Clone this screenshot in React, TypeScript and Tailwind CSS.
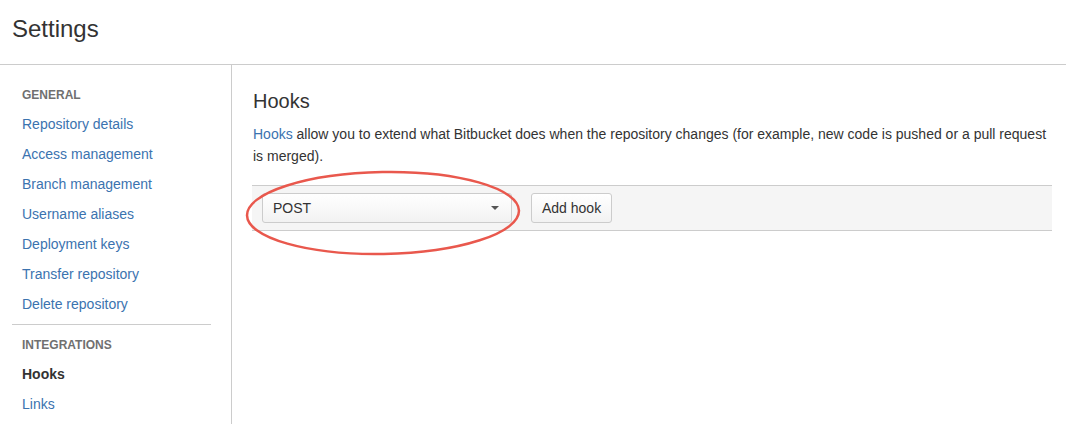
const general = [
  "Repository details",
  "Access management",
  "Branch management",
  "Username aliases",
  "Deployment keys",
  "Transfer repository",
  "Delete repository",
];

export default function App() {
  return (
    <div className="w-[1066px] h-[424px] overflow-hidden bg-white text-[#333] font-['Liberation_Sans',Arial,sans-serif]">
      <div className="h-[65px] border-b border-[#ccc] pl-[12px] pt-[14px]">
        <h1 className="text-[24px] leading-[30px] text-[#333]">Settings</h1>
      </div>
      <div className="flex h-[359px]">
        <div className="w-[232px] shrink-0 border-r border-[#ccc] pt-[20px] pl-[12px] pr-[20px]">
          <div className="pl-[10px] text-[12px] font-bold leading-[20px] text-[#707070]">GENERAL</div>
          <ul className="mt-[9px] flex flex-col gap-[10px] pl-[10px] text-[14px] leading-[20px] text-[#3b73af]">
            {general.map((item) => (
              <li key={item}>{item}</li>
            ))}
          </ul>
          <div className="mt-[10px] h-px bg-[#ccc]" />
          <div className="mt-[10px] pl-[10px] text-[12px] font-bold leading-[20px] text-[#707070]">INTEGRATIONS</div>
          <ul className="mt-[9px] flex flex-col gap-[10px] pl-[10px] text-[14px] leading-[20px]">
            <li className="font-bold text-[#333]">Hooks</li>
            <li className="text-[#3b73af]">Links</li>
          </ul>
        </div>
        <div className="relative flex-1 pl-[21px] pr-[14px] pt-[22px]">
          <h2 className="text-[20px] leading-[28px] text-[#333]">Hooks</h2>
          <p className="mt-[8px] text-[14px] leading-[22px]">
            <span className="text-[#3b73af]">Hooks</span> allow you to extend what Bitbucket does when the repository changes (for example, new code is pushed or a pull request is merged).
          </p>
          <div className="-ml-px mt-[18px] flex h-[46px] items-center gap-[19px] border-y border-[#ccc] bg-[#f5f5f5] pl-[10px]">
            <div className="flex h-[30px] w-[250px] items-center justify-between rounded-[3px] border border-[#ccc] bg-gradient-to-b from-white to-[#f2f2f2] pl-[10px] pr-[12px] text-[14px]">
              <span>POST</span>
              <span className="h-0 w-0 border-x-[4px] border-t-[4px] border-x-transparent border-t-[#555]" />
            </div>
            <button className="h-[30px] rounded-[3px] border border-[#ccc] bg-gradient-to-b from-white to-[#f2f2f2] px-[10px] text-[14px] text-[#333]">
              Add hook
            </button>
          </div>
          <svg
            className="pointer-events-none absolute left-[11px] top-[103px]"
            width="280"
            height="90"
            viewBox="0 0 280 90"
          >
            <ellipse
              cx="140"
              cy="45"
              rx="136"
              ry="41"
              fill="none"
              stroke="#e9584d"
              strokeWidth="2.5"
              transform="rotate(-1 140 45)"
            />
          </svg>
        </div>
      </div>
    </div>
  );
}
